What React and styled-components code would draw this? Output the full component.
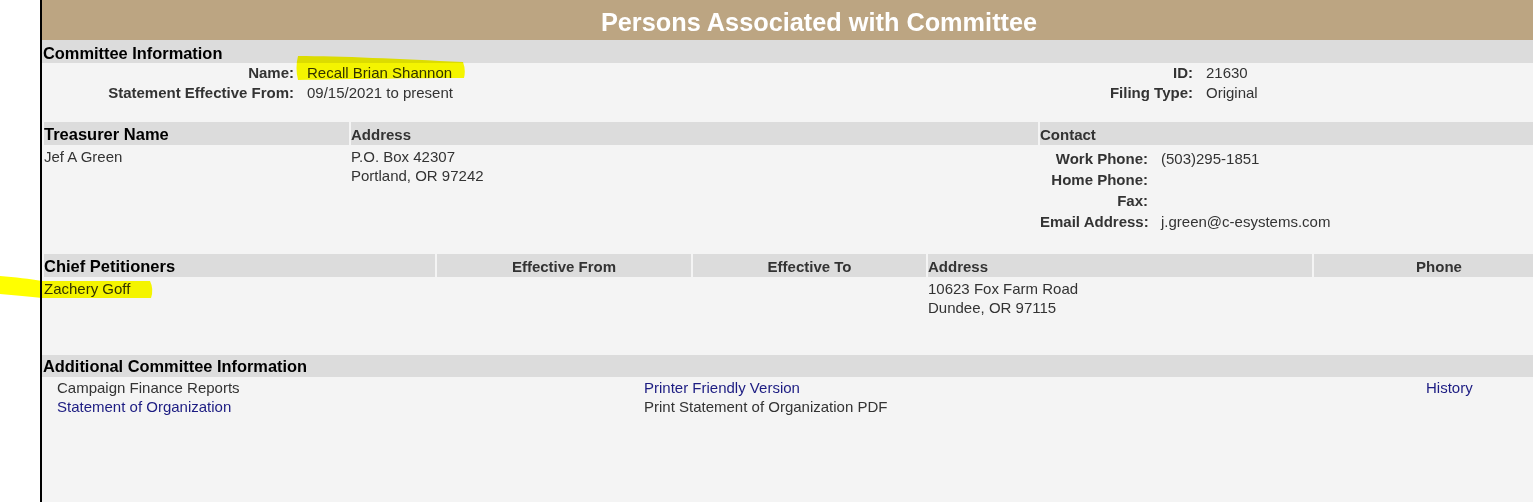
import { Fragment } from "react";
import styled, { createGlobalStyle } from "styled-components";

const GlobalStyle = createGlobalStyle`
  html, body {
    margin: 0;
    padding: 0;
    background: #ffffff;
    overflow: hidden;
  }
  body {
    font-family: "Liberation Sans", Arial, sans-serif;
    font-size: 15px;
    color: #333333;
  }
`;

const Page = styled.div`
  position: relative;
  isolation: isolate;
  display: flex;
  height: 100vh;
  overflow: hidden;
`;

const Gutter = styled.div`
  flex: 0 0 40px;
  background: #ffffff;
`;

const Main = styled.main`
  flex: 0 0 1554px;
  border-left: 2px solid #000000;
  background: #f4f4f4;
`;

const TitleBar = styled.header`
  height: 35px;
  padding-top: 5px;
  background: #bca582;
`;

const Title = styled.h1`
  margin: 0;
  color: #ffffff;
  font-size: 25.3px;
  font-weight: bold;
  line-height: 35px;
  text-align: center;
`;

const SectionTitle = styled.h2`
  margin: ${(p) => p.$top || 0}px 0 0;
  height: ${(p) => p.$height || 23}px;
  box-sizing: border-box;
  padding: ${(p) => p.$pad || 4}px 0 0 1px;
  background: #dcdcdc;
  color: #000000;
  font-size: 16.4px;
  font-weight: bold;
  line-height: 19px;
`;

// committee info: label / value pairs in two blocks
const InfoGrid = styled.dl`
  margin: 0;
  display: grid;
  grid-template-columns: 252px 723px 150px 1fr;
  grid-auto-rows: 20px;
  column-gap: 13px;
  line-height: 20px;
`;

const Label = styled.dt`
  margin: 0;
  font-weight: bold;
  text-align: right;
  white-space: nowrap;
`;

const Value = styled.dd`
  margin: 0;
  white-space: nowrap;
`;

const Table = styled.div`
  margin-top: ${(p) => p.$top}px;
  padding-left: 2px;
  display: grid;
  grid-template-columns: ${(p) => p.$cols};
  column-gap: 2px;
  row-gap: 2px;
`;

const HeadCell = styled.div`
  height: 23px;
  box-sizing: border-box;
  padding: 2px ${(p) => p.$padRight || 0}px 0 0;
  background: #dcdcdc;
  color: ${(p) => (p.$main ? "#000000" : "#333333")};
  font-size: ${(p) => (p.$main ? 16.5 : 15)}px;
  font-weight: bold;
  line-height: 21px;
  text-align: ${(p) => (p.$center ? "center" : "left")};
  white-space: nowrap;
`;

const Cell = styled.div`
  min-height: ${(p) => p.$minHeight || 0}px;
  line-height: 19px;
  white-space: nowrap;
`;

const ContactGrid = styled.dl`
  margin: 0;
  padding-top: 1px;
  display: grid;
  grid-template-columns: 108px 1fr;
  grid-auto-rows: 21px;
  column-gap: 13px;
  line-height: 21px;
`;

const LinkGrid = styled.div`
  padding: 1px 0 0 15px;
  display: grid;
  grid-template-columns: 587px 782px auto;
  grid-auto-rows: 19px;
  line-height: 19px;
  white-space: nowrap;
`;

const Link = styled.a`
  color: #1c1c82;
  text-decoration: none;
`;

const Plain = styled.span`
  color: #333333;
`;

const Highlights = styled.svg`
  position: absolute;
  left: 0;
  top: 0;
  width: 100%;
  height: 100%;
  pointer-events: none;
  mix-blend-mode: multiply;
  z-index: 2;
`;

const committee = [
  ["Name:", "Recall Brian Shannon", "ID:", "21630"],
  ["Statement Effective From:", "09/15/2021 to present", "Filing Type:", "Original"],
];

const contact = [
  ["Work Phone:", "(503)295-1851"],
  ["Home Phone:", ""],
  ["Fax:", ""],
  ["Email Address:", "j.green@c-esystems.com"],
];

export default function App() {
  return (
    <>
      <GlobalStyle />
      <Page>
        <Gutter />
        <Main>
          <TitleBar>
            <Title>Persons Associated with Committee</Title>
          </TitleBar>

          <SectionTitle>Committee Information</SectionTitle>
          <InfoGrid>
            {committee.map(([l1, v1, l2, v2]) => (
              <Fragment key={l1}>
                <Label>{l1}</Label>
                <Value>{v1}</Value>
                <Label>{l2}</Label>
                <Value>{v2}</Value>
              </Fragment>
            ))}
          </InfoGrid>

          <Table $top={19} $cols="305px 687px 1fr">
            <HeadCell $main>Treasurer Name</HeadCell>
            <HeadCell>Address</HeadCell>
            <HeadCell>Contact</HeadCell>
            <Cell>Jef A Green</Cell>
            <Cell>
              P.O. Box 42307
              <br />
              Portland, OR 97242
            </Cell>
            <ContactGrid>
              {contact.map(([label, value]) => (
                <Fragment key={label}>
                  <Label>{label}</Label>
                  <Value>{value}</Value>
                </Fragment>
              ))}
            </ContactGrid>
          </Table>

          <Table $top={22} $cols="391px 254px 233px 384px 1fr">
            <HeadCell $main>Chief Petitioners</HeadCell>
            <HeadCell $center>Effective From</HeadCell>
            <HeadCell $center>Effective To</HeadCell>
            <HeadCell>Address</HeadCell>
            <HeadCell $center $padRight={32}>
              Phone
            </HeadCell>
            <Cell $minHeight={38}>Zachery Goff</Cell>
            <Cell />
            <Cell />
            <Cell>
              10623 Fox Farm Road
              <br />
              Dundee, OR 97115
            </Cell>
            <Cell />
          </Table>

          <SectionTitle $top={38} $height={22} $pad={2}>
            Additional Committee Information
          </SectionTitle>
          <LinkGrid>
            <Plain>Campaign Finance Reports</Plain>
            <Link href="#">Printer Friendly Version</Link>
            <Link href="#">History</Link>
            <Link href="#">Statement of Organization</Link>
            <Plain>Print Statement of Organization PDF</Plain>
          </LinkGrid>
        </Main>

        <Highlights viewBox="0 0 1533 502" preserveAspectRatio="xMinYMin meet">
          <path
            d="M298,56 C340,56 400,59 463,62 Q466,70 464,78 C420,78 350,79 298,80 Q295,68 298,56 Z"
            fill="#ffff00"
          />
          <path
            d="M0,276 C15,277 30,279 42,281 L150,281 Q154,289 151,298 L42,298 C30,297 15,295 0,294 Z"
            fill="#ffff00"
          />
        </Highlights>
      </Page>
    </>
  );
}
